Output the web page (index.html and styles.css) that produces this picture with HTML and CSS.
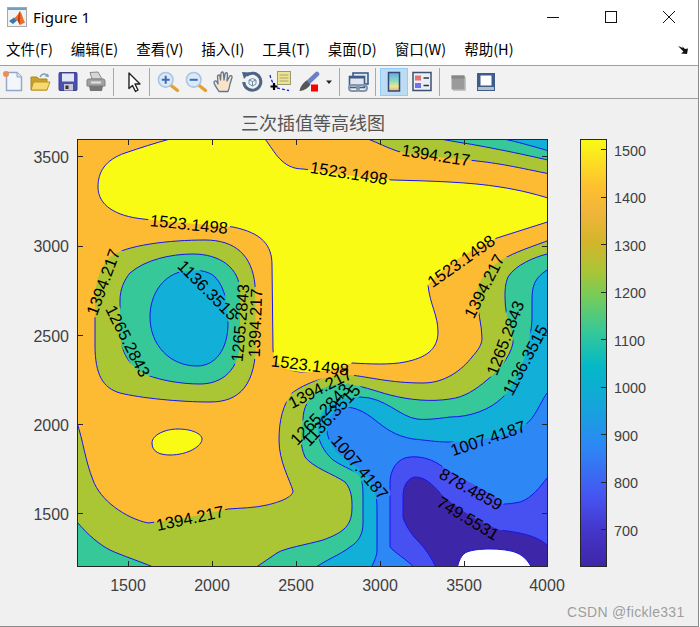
FILE: index.html
```html
<!DOCTYPE html>
<html lang="zh">
<head>
<meta charset="utf-8">
<title>Figure 1</title>
<link rel="stylesheet" href="styles.css">
</head>
<body>
<div class="window">
  <header class="titlebar">
    <svg class="app-icon" viewBox="0 0 20 20" width="20" height="20">
      <rect x="0.5" y="0.5" width="19" height="19" fill="#f2f2f2" stroke="#a8a8a8"/>
      <rect x="1" y="1" width="18" height="2" fill="#6f9fc4"/>
      <path d="M2,14 L7,10.5 L10,13.5 L6,17 Z" fill="#2f78bd"/>
      <path d="M13,4 C11,7 9.500,10 7,11 L11,14.500 L13,18 L18,15.500 C16,12 15,7 13,4 Z" fill="#e8702a"/>
      <path d="M13,4 C11.500,7 10.500,11 11,14.500 L13,18 C12.500,13 13.500,8 13,4 Z" fill="#c8391c"/>
    </svg>
    <span class="title-text">Figure 1</span>
    <div class="win-controls">
      <button class="win-btn"><svg viewBox="0 0 14 14" width="14" height="14"><path d="M1,7.500 H13" stroke="#111" fill="none"/></svg></button>
      <button class="win-btn"><svg viewBox="0 0 14 14" width="14" height="14"><rect x="1.500" y="1.500" width="11" height="11" stroke="#111" fill="none"/></svg></button>
      <button class="win-btn"><svg viewBox="0 0 14 14" width="14" height="14"><path d="M1,1 L13,13 M13,1 L1,13" stroke="#111" fill="none"/></svg></button>
    </div>
  </header>

  <nav class="menubar">
    <span>文件(F)</span><span>编辑(E)</span><span>查看(V)</span><span>插入(I)</span><span>工具(T)</span><span>桌面(D)</span><span>窗口(W)</span><span>帮助(H)</span>
    <svg class="dock-arrow" viewBox="0 0 12 10" width="12" height="10"><path d="M1,1 L6,3 L5,1 L8,4 L11,3.500 L10,9 L4,8.500 L6.500,6.500 Z" fill="#111"/></svg>
  </nav>

  <div class="toolbar">
    <div class="tool tool-first"><svg viewBox="0 0 24 24" width="24" height="24"><path d="M5.500,2.500 H16 L20.500,7 V20.500 H5.500 Z" fill="#f3f7fc" stroke="#8ea7ca" stroke-width="1.400"/><path d="M16,2.500 V7 H20.500" fill="#d8e4f2" stroke="#8ea7ca"/><circle cx="5" cy="4" r="3" fill="#ef8c55"/></svg></div>
    <div class="tool"><svg viewBox="0 0 24 24" width="24" height="24"><path d="M3,20 V7 H9 L11,9 H19 V20 Z" fill="#c9a02a" stroke="#a98a22"/><path d="M3,20 L5.500,12 H22 L19,20 Z" fill="#f6d970" stroke="#b8942a"/><path d="M12,7 C14,3.500 17.500,3 19,6" fill="none" stroke="#8199b3" stroke-width="1.500"/><path d="M17,6.500 L21,7 L20,3.500 Z" fill="#8199b3"/></svg></div>
    <div class="tool"><svg viewBox="0 0 24 24" width="24" height="24"><rect x="3" y="2.500" width="18" height="18" rx="1" fill="#4a51ad" stroke="#3b4090"/><rect x="6" y="3.500" width="12" height="8" fill="#e3e6f6"/><rect x="8" y="14" width="9" height="6.500" fill="#c9c9d6"/><rect x="9.500" y="15.500" width="3" height="3.500" fill="#333"/></svg></div>
    <div class="tool"><svg viewBox="0 0 24 24" width="24" height="24"><path d="M6,2.500 L14,2 L18,9 H8 Z" fill="#d2d7dc" stroke="#8a8a8a"/><path d="M3,10 Q3,9 5,9 H19 Q21,9 21,11 V16 H3 Z" fill="#a2a2a2" stroke="#808080"/><path d="M5,16 H19 L18,21 H6 Z" fill="#767676"/><rect x="7" y="11.500" width="10" height="2" fill="#e2e2e2"/></svg></div>
    <span class="sep"></span>
    <div class="tool"><svg viewBox="0 0 24 24" width="24" height="24"><path d="M9,3 V18.500 L12.500,15.500 L15.500,21.500 L18,20 L15,14 L20,14 Z" fill="#fff" stroke="#222" stroke-width="1.400" stroke-linejoin="round"/></svg></div>
    <span class="sep"></span>
    <div class="tool"><svg viewBox="0 0 24 24" width="24" height="24"><path d="M14.500,15 L21.500,20.500" stroke="#e2a233" stroke-width="3.400" stroke-linecap="round"/><circle cx="9.700" cy="9.800" r="7.300" fill="#dbe9f8" stroke="#a9c4e4" stroke-width="1.600"/><path d="M5.700,9.800 H13.700 M9.700,5.800 V13.800" stroke="#3a6cb3" stroke-width="2"/></svg></div>
    <div class="tool"><svg viewBox="0 0 24 24" width="24" height="24"><path d="M14.500,15 L21.500,20.500" stroke="#e2a233" stroke-width="3.400" stroke-linecap="round"/><circle cx="9.700" cy="9.800" r="7.300" fill="#dbe9f8" stroke="#a9c4e4" stroke-width="1.600"/><path d="M5.700,9.800 H13.700" stroke="#3a6cb3" stroke-width="2"/></svg></div>
    <div class="tool"><svg viewBox="0 0 24 24" width="24" height="24"><path d="M7,21.500 C5,18 2,14.500 2,12.500 C2,10.500 4,10.500 5,12 L6,14 L5.500,6.500 C5.500,4.500 8,4.500 8,6.500 L8.500,10 L9,3.500 C9,1.500 11.500,1.500 11.500,3.500 L12,10 L13,4 C13.300,2 15.700,2.500 15.500,4.500 L15,11 L17.500,6.500 C18.300,5 20.500,5.500 20,7.500 L18,14 C17.500,17 17,19 16,21.500 Z" fill="#fbe3c8" stroke="#5f7596" stroke-width="1.300" stroke-linejoin="round"/></svg></div>
    <div class="tool"><svg viewBox="0 0 24 24" width="24" height="24"><path d="M6.500,5.500 A8.500,8.500 0 1 1 3.800,12" fill="none" stroke="#4a6585" stroke-width="3"/><path d="M2,2 L10,2.500 L4,9 Z" fill="#4a6585"/><path d="M9,10 L12.500,8.500 L16,10 V14 L12.500,16 L9,14 Z M9,10 L12.500,11.500 L16,10 M12.500,11.500 V16" fill="none" stroke="#6f8ca8"/></svg></div>
    <div class="tool"><svg viewBox="0 0 24 24" width="24" height="24"><rect x="9.500" y="1.500" width="13" height="13" fill="#efe58e" stroke="#9a9a72"/><path d="M11.500,5 H20.500 M11.500,8 H20.500 M11.500,11 H20.500" stroke="#a6a27a"/><path d="M2,5 C3,10 5,14 9,18 L21,20.500" fill="none" stroke="#2323dd" stroke-width="1.300" stroke-dasharray="3 2"/><path d="M6,13 V20 M2.500,16.500 H9.500" stroke="#000" stroke-width="2.200"/></svg></div>
    <div class="tool"><svg viewBox="0 0 24 24" width="24" height="24"><path d="M21,4 L12,12.500" stroke="#6b80c9" stroke-width="4.500" stroke-linecap="round"/><path d="M10.500,10.500 L14.500,14.500 C12.500,17.500 9,20.500 3.500,21 C4,17 7,13 10.500,10.500 Z" fill="#565656"/><rect x="15" y="14.500" width="7" height="7" fill="#f00"/></svg></div>
    <div class="tool-arrow"><svg viewBox="0 0 8 5" width="8" height="5"><path d="M1,0.500 H7 L4,4 Z" fill="#222"/></svg></div>
    <span class="sep"></span>
    <div class="tool"><svg viewBox="0 0 24 24" width="24" height="24"><rect x="7" y="3" width="15" height="11" fill="#e0e7f0" stroke="#3e5c86" stroke-width="1.600"/><rect x="3.500" y="6.500" width="15" height="11" fill="#e0e7f0" stroke="#3e5c86" stroke-width="1.600"/><rect x="3.500" y="6" width="15" height="2.500" fill="#3e5c86"/><rect x="3" y="15" width="10" height="6" rx="3" fill="none" stroke="#8496ad" stroke-width="2"/><rect x="11" y="15" width="10" height="6" rx="3" fill="none" stroke="#8496ad" stroke-width="2"/></svg></div>
    <span class="sep"></span>
    <div class="tool tool-active"><svg viewBox="0 0 24 24" width="24" height="24"><defs><linearGradient id="cbicon" x1="0" y1="0" x2="0" y2="1"><stop offset="0" stop-color="#6aa6e8"/><stop offset="0.45" stop-color="#86dcc0"/><stop offset="0.75" stop-color="#ece892"/><stop offset="1" stop-color="#efae70"/></linearGradient></defs><rect x="6.500" y="2.500" width="11" height="18.500" fill="url(#cbicon)" stroke="#34457a" stroke-width="1.500"/></svg></div>
    <div class="tool"><svg viewBox="0 0 24 24" width="24" height="24"><rect x="3" y="2.500" width="18" height="18" fill="#e9eff6" stroke="#3e5070" stroke-width="1.500"/><rect x="5" y="5.500" width="6" height="5" fill="#e87272"/><rect x="5" y="13" width="6" height="5" fill="#7272e8"/><path d="M13.500,8 H19 M13.500,15.500 H19" stroke="#333" stroke-width="1.600"/></svg></div>
    <span class="sep"></span>
    <div class="tool"><svg viewBox="0 0 24 24" width="24" height="24"><rect x="7" y="7" width="13" height="14" fill="#c6c6c6"/><rect x="5.500" y="5.500" width="13" height="14" fill="#9a9a9a"/><rect x="5.500" y="5.500" width="13" height="3" fill="#868686"/></svg></div>
    <div class="tool"><svg viewBox="0 0 24 24" width="24" height="24"><rect x="3" y="3" width="18" height="18" fill="#3e5c8a"/><rect x="6.500" y="5.500" width="11" height="10" fill="#fff"/><rect x="4" y="17" width="16" height="3" fill="#b7bfca"/></svg></div>
  </div>

  <main class="figure">
    <svg class="canvas" viewBox="0 99 698 527" width="698" height="527">
      <defs>
        <clipPath id="plotclip"><rect x="77" y="139" width="470.500" height="427.500"/></clipPath>
        <linearGradient id="parula" x1="0" y1="0" x2="0" y2="1">
          <stop offset="0" stop-color="#f9fb15"/>
          <stop offset="0.11" stop-color="#fdc030"/>
          <stop offset="0.17" stop-color="#f0b53a"/>
          <stop offset="0.24" stop-color="#d4b52c"/>
          <stop offset="0.31" stop-color="#a9c537"/>
          <stop offset="0.37" stop-color="#73cc5c"/>
          <stop offset="0.45" stop-color="#36c898"/>
          <stop offset="0.53" stop-color="#04b9c6"/>
          <stop offset="0.62" stop-color="#14a6da"/>
          <stop offset="0.72" stop-color="#2d87f5"/>
          <stop offset="0.84" stop-color="#4653f0"/>
          <stop offset="0.92" stop-color="#4434c8"/>
          <stop offset="1" stop-color="#3e26a8"/>
        </linearGradient>
        <path id="r-yellow" d="M260,130 L265,139 C275,152 282,169 303,169 C330,172 360,178 393,180 C430,181 470,182 500,187 C520,190 540,195 560,202 L560,218 L497,238 C470,250 445,265 428,285 C430,305 438,315 438,332 C438,350 425,358 405,362 C390,365 370,364 352,363 C340,368 320,373 300,372 C285,370 274,365 273,350 L272,265 C272,245 262,233 233,227 C200,224 170,222 143,219 C115,216 98,205 98,187 C98,172 105,160 125,153 C140,148 155,143 170,139 L175,130 Z"/>
        <path id="r-yellow2" d="M152,443 C152,435 165,429 178,429 C192,429 202,434 202,439 C202,446 188,455 170,455 C160,455 152,452 152,443 Z"/>
        <path id="r-olive" d="M70,415 L77,423 C83,440 85,460 93,480 C100,500 125,518 148,523 C175,520 200,515 228,509 C240,508 255,508 267,505 C280,502 293,497 293,491 C290,480 279,462 279,440 C279,420 283,405 292,393 C305,383 330,374 350,375 C370,377 390,383 423,383 C445,383 462,370 472,357 C478,350 482,345 482,338 C482,325 477,310 477,295 C477,280 490,265 507,257 C520,250 540,244 560,236 L560,580 L70,580 Z"/>
        <path id="r-olive-tr" d="M365,130 L368,139 C378,143 388,148 397,151 S450,158 477,161 S520,168 560,176 L560,130 Z"/>
        <path id="r-green-tr" d="M437,130 L440,139 C448,140 455,142 463,143 S520,153 560,163 L560,130 Z"/>
        <path id="r-teal-tr" d="M500,130 L503,139 C515,141 535,147 560,154 L560,130 Z"/>
        <path id="r-green-bl" d="M70,516 L77,522 C88,535 100,545 110,550 S145,563 160,570 L160,580 L70,580 Z"/>
        <path id="r-green" d="M560,250 L547,254 C535,257 515,265 508,277 C505,285 505,290 505,297 C505,320 513,330 513,343 C510,358 497,372 487,380 C475,390 465,397 450,399 C430,402 410,400 390,395 C375,391 360,385 345,384 C325,383 303,395 303,420 C300,435 300,445 305,457 C312,467 335,475 345,482 C352,490 352,500 352,507 C352,525 345,532 323,540 C305,545 285,548 277,553 L252,570 L250,580 L560,580 Z"/>
        <path id="r-teal" d="M560,262 L547,270 C535,278 532,285 532,300 L532,317 C532,340 520,380 503,397 C490,410 470,417 450,417 C435,419 425,420 417,419 C400,417 385,397 360,397 C340,396 320,405 318,425 C316,440 325,453 333,460 C345,468 355,470 360,477 C363,482 363,490 363,500 L363,523 C363,535 358,542 350,547 C340,555 325,560 312,570 L310,580 L560,580 Z"/>
        <path id="r-blue" d="M560,380 L547,393 C540,403 535,418 525,425 C510,435 480,442 450,442 C435,442 425,440 413,439 C395,436 385,428 375,420 C365,412 355,407 345,407 C335,407 327,418 327,430 C327,440 335,452 350,463 C362,470 377,480 377,507 L377,550 C377,556 374,562 370,570 L370,580 L560,580 Z"/>
        <path id="r-indigo" d="M560,470 L547,478 C540,487 532,498 520,502 C515,503 510,504 503,504 C490,490 470,485 437,463 C430,459 420,456 410,457 C397,458 390,470 390,483 L390,547 C395,553 405,558 417,570 L417,580 L560,580 Z"/>
        <path id="r-purple" d="M560,552 L547,545 C538,537 525,533 500,530 C485,525 455,508 440,493 C432,484 425,477 415,477 C407,478 403,487 403,497 L403,517 C405,525 412,535 417,540 C425,548 432,558 437,570 L437,580 L560,580 Z"/>
        <path id="r-white" d="M456,575 C458,560 462,554 467,552 S480,549 490,549 S510,550 517,553 S530,562 535,575 Z"/>
        <path id="r-loop1" d="M110,257 C125,245 170,240 205,240 C235,240 252,255 255,285 L256,340 C256,385 240,402 210,402 C180,402 140,398 120,393 C103,388 95,375 95,345 L95,300 C95,282 100,267 110,257 Z"/>
        <path id="r-loop2" d="M130,273 C145,260 170,254 193,254 C220,254 240,268 240,292 L240,340 C240,370 222,384 200,384 C180,384 160,380 147,375 C130,368 120,352 120,330 L120,300 C120,290 124,280 130,273 Z"/>
        <path id="r-loop3" d="M180,272 C195,269 208,270 215,277 C225,287 228,305 228,323 C228,350 215,366 197,366 C170,366 150,345 150,317 C150,295 162,277 180,272 Z"/>
        <mask id="labelgaps" maskUnits="userSpaceOnUse" x="0" y="99" width="698" height="527">
          <rect x="0" y="99" width="698" height="527" fill="#fff"/>
          <g fill="#000">
            <rect x="-41" y="-8" width="82" height="16" transform="translate(189 224) rotate(6)"/>
            <rect x="-36" y="-8" width="72" height="16" transform="translate(103 282) rotate(-70)"/>
            <rect x="-41" y="-8" width="82" height="16" transform="translate(128 341) rotate(63)"/>
            <rect x="-41" y="-8" width="82" height="16" transform="translate(208 290) rotate(45)"/>
            <rect x="-41" y="-8" width="82" height="16" transform="translate(240 323) rotate(-85)"/>
            <rect x="-36" y="-8" width="72" height="16" transform="translate(255 323) rotate(-88)"/>
            <rect x="-41" y="-8" width="82" height="16" transform="translate(310 365) rotate(7)"/>
            <rect x="-36" y="-8" width="72" height="16" transform="translate(320 388) rotate(-27)"/>
            <rect x="-41" y="-8" width="82" height="16" transform="translate(320 414) rotate(-46)"/>
            <rect x="-41" y="-8" width="82" height="16" transform="translate(331 415) rotate(-47)"/>
            <rect x="-41" y="-8" width="82" height="16" transform="translate(360 467) rotate(50)"/>
            <rect x="-41" y="-8" width="82" height="16" transform="translate(488 438) rotate(-19)"/>
            <rect x="-36" y="-8" width="72" height="16" transform="translate(471 489) rotate(29)"/>
            <rect x="-36" y="-8" width="72" height="16" transform="translate(468 518) rotate(31)"/>
            <rect x="-41" y="-8" width="82" height="16" transform="translate(349 173) rotate(9)"/>
            <rect x="-36" y="-8" width="72" height="16" transform="translate(436 155) rotate(9)"/>
            <rect x="-41" y="-8" width="82" height="16" transform="translate(461 261) rotate(-35)"/>
            <rect x="-36" y="-8" width="72" height="16" transform="translate(484 286) rotate(-63)"/>
            <rect x="-41" y="-8" width="82" height="16" transform="translate(505 338) rotate(-69)"/>
            <rect x="-41" y="-8" width="82" height="16" transform="translate(525 360) rotate(-62)"/>
            <rect x="-36" y="-8" width="72" height="16" transform="translate(190 518) rotate(-12)"/>
          </g>
        </mask>
      </defs>

      <text class="plot-title" x="313" y="130">三次插值等高线图</text>

      <g clip-path="url(#plotclip)">
        <rect x="77" y="139" width="471" height="428" class="f-orange"/>
        <use href="#r-yellow" class="f-yellow"/>
        <use href="#r-yellow2" class="f-yellow"/>
        <use href="#r-olive" class="f-olive"/>
        <use href="#r-olive-tr" class="f-olive"/>
        <use href="#r-green-tr" class="f-green"/>
        <use href="#r-teal-tr" class="f-teal"/>
        <use href="#r-green-bl" class="f-green"/>
        <use href="#r-green" class="f-green"/>
        <use href="#r-teal" class="f-teal"/>
        <use href="#r-blue" class="f-blue"/>
        <use href="#r-indigo" class="f-indigo"/>
        <use href="#r-purple" class="f-purple"/>
        <use href="#r-white" class="f-white"/>
        <use href="#r-loop1" class="f-olive"/>
        <use href="#r-loop2" class="f-green"/>
        <use href="#r-loop3" class="f-teal"/>
        <g class="contours" mask="url(#labelgaps)">
          <use href="#r-yellow"/><use href="#r-yellow2"/><use href="#r-olive"/><use href="#r-olive-tr"/><use href="#r-green-tr"/><use href="#r-teal-tr"/><use href="#r-green-bl"/><use href="#r-green"/><use href="#r-teal"/><use href="#r-blue"/><use href="#r-indigo"/><use href="#r-purple"/><use href="#r-white"/><use href="#r-loop1"/><use href="#r-loop2"/><use href="#r-loop3"/>
        </g>
      </g>

      <g class="clabels">
        <text transform="translate(189 224) rotate(6)">1523.1498</text>
        <text transform="translate(103 282) rotate(-70)">1394.217</text>
        <text transform="translate(128 341) rotate(63)">1265.2843</text>
        <text transform="translate(208 290) rotate(45)">1136.3515</text>
        <text transform="translate(240 323) rotate(-85)">1265.2843</text>
        <text transform="translate(255 323) rotate(-88)">1394.217</text>
        <text transform="translate(310 365) rotate(7)">1523.1498</text>
        <text transform="translate(320 388) rotate(-27)">1394.217</text>
        <text transform="translate(320 414) rotate(-46)">1265.2843</text>
        <text transform="translate(331 415) rotate(-47)">1136.3515</text>
        <text transform="translate(360 467) rotate(50)">1007.4187</text>
        <text transform="translate(488 438) rotate(-19)">1007.4187</text>
        <text transform="translate(471 489) rotate(29)">878.4859</text>
        <text transform="translate(468 518) rotate(31)">749.5531</text>
        <text transform="translate(349 173) rotate(9)">1523.1498</text>
        <text transform="translate(436 155) rotate(9)">1394.217</text>
        <text transform="translate(461 261) rotate(-35)">1523.1498</text>
        <text transform="translate(484 286) rotate(-63)">1394.217</text>
        <text transform="translate(505 338) rotate(-69)">1265.2843</text>
        <text transform="translate(525 360) rotate(-62)">1136.3515</text>
        <text transform="translate(190 518) rotate(-12)">1394.217</text>
      </g>

      <rect class="axis-box" x="77.500" y="139.500" width="470" height="427"/>
      <path class="axis-ticks" d="M128.500,566 v-5 M212.500,566 v-5 M296.500,566 v-5 M380.500,566 v-5 M464.500,566 v-5 M128.500,140 v5 M212.500,140 v5 M296.500,140 v5 M380.500,140 v5 M464.500,140 v5 M78,156.500 h5 M78,246.500 h5 M78,335.500 h5 M78,424.500 h5 M78,513.500 h5 M547,156.500 h-5 M547,246.500 h-5 M547,335.500 h-5 M547,424.500 h-5 M547,513.500 h-5"/>

      <g class="ytick">
        <text x="69" y="163">3500</text>
        <text x="69" y="252">3000</text>
        <text x="69" y="342">2500</text>
        <text x="69" y="431">2000</text>
        <text x="69" y="520">1500</text>
      </g>
      <g class="xtick">
        <text x="128" y="591">1500</text>
        <text x="212" y="591">2000</text>
        <text x="296" y="591">2500</text>
        <text x="380" y="591">3000</text>
        <text x="464" y="591">3500</text>
        <text x="547" y="591">4000</text>
      </g>

      <rect x="580.500" y="139.500" width="26" height="427" fill="url(#parula)" class="axis-box-bar"/>
      <path class="axis-ticks" d="M606,149.500 h-5 M606,197.500 h-5 M606,244.500 h-5 M606,292.500 h-5 M606,339.500 h-5 M606,387.500 h-5 M606,434.500 h-5 M606,482.500 h-5 M606,529.500 h-5"/>
      <g class="cbtick">
        <text x="614" y="156">1500</text>
        <text x="614" y="203">1400</text>
        <text x="614" y="251">1300</text>
        <text x="614" y="298">1200</text>
        <text x="614" y="346">1100</text>
        <text x="614" y="393">1000</text>
        <text x="614" y="441">900</text>
        <text x="614" y="488">800</text>
        <text x="614" y="536">700</text>
      </g>

      <text class="watermark" x="567" y="617">CSDN @fickle331</text>
    </svg>
  </main>
</div>
</body>
</html>
```
FILE: styles.css
```css
* { box-sizing: border-box; }
html, body { margin: 0; padding: 0; background: #fff; }
.window {
  width: 699px;
  height: 627px;
  display: flex;
  flex-direction: column;
  border-right: 1px solid #8c8c8c;
  border-bottom: 1px solid #8c8c8c;
  background: #f0f0f0;
  overflow: hidden;
}
.titlebar {
  height: 34px;
  flex: none;
  display: flex;
  align-items: center;
  background: #fff;
  padding-left: 7px;
}
.app-icon { display: block; }
.title-text {
  margin-left: 6px;
  font: 15px/1 "Noto Sans", "Liberation Sans", sans-serif;
  color: #000;
}
.win-controls { margin-left: auto; display: flex; }
.win-btn {
  width: 58px;
  height: 34px;
  padding: 0;
  border: 0;
  background: none;
  display: flex;
  align-items: center;
  justify-content: center;
}
.menubar {
  height: 31px;
  flex: none;
  display: flex;
  align-items: center;
  gap: 18px;
  padding-left: 6px;
  background: #fff;
  font: 14.5px/1 "Noto Sans CJK SC", "Noto Sans", sans-serif;
  color: #000;
}
.dock-arrow { margin-left: auto; margin-right: 9px; }
.toolbar {
  height: 34px;
  flex: none;
  display: flex;
  align-items: center;
  background: #f2f2f2;
  border-top: 1px solid #a0a0a0;
  border-bottom: 1px solid #a0a0a0;
}
.tool {
  width: 28px;
  height: 28px;
  flex: none;
  display: flex;
  align-items: center;
  justify-content: center;
}
.tool-first { width: 26px; }
.tool-active {
  background: #bcdcf4;
  border: 1px solid #90cdf8;
}
.tool-arrow {
  width: 14px;
  flex: none;
  display: flex;
  justify-content: center;
}
.sep {
  width: 1px;
  height: 28px;
  flex: none;
  margin: 0 4px 0 3px;
  background: #a8a8a8;
}
.figure { flex: 1; min-height: 0; background: #f0f0f0; }
.canvas { display: block; }

.plot-title {
  font: 18px "Noto Sans CJK SC", sans-serif;
  fill: #555;
  text-anchor: middle;
}
.f-orange { fill: #fdbb33; }
.f-yellow { fill: #f9fb15; }
.f-olive { fill: #abc635; }
.f-green { fill: #36c898; }
.f-teal { fill: #12b0d8; }
.f-blue { fill: #2d87f5; }
.f-indigo { fill: #4750f0; }
.f-purple { fill: #3e26a8; }
.f-white { fill: #fff; }
.contours { fill: none; stroke: #1414f0; stroke-width: 1; }
.clabels text {
  font: 16.5px "Liberation Sans", Arial, sans-serif;
  fill: #000;
  text-anchor: middle;
  dominant-baseline: central;
}
.axis-box { fill: none; stroke: #262626; stroke-width: 1; }
.axis-box-bar { stroke: #262626; stroke-width: 1; }
.axis-ticks { fill: none; stroke: #262626; stroke-width: 1; }
.ytick text, .xtick text {
  font: 16px "Liberation Sans", Arial, sans-serif;
  fill: #404040;
}
.ytick text { text-anchor: end; }
.xtick text { text-anchor: middle; }
.cbtick text {
  font: 14.4px "Liberation Sans", Arial, sans-serif;
  fill: #404040;
}
.watermark {
  font: 14px "Liberation Sans", Arial, sans-serif;
  letter-spacing: 0.3px;
  fill: #8e8e8e;
  fill-opacity: 0.85;
}
```
